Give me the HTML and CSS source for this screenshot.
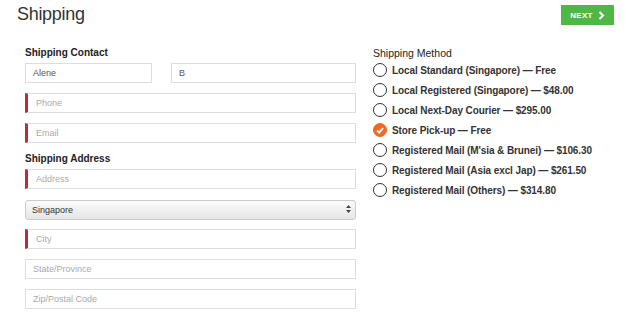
FILE: index.html
```html
<!DOCTYPE html>
<html>
<head>
	<title>Shipping</title>
	<link rel="stylesheet" href="styles.css">
</head>
<body>
<div class="header">
	<h1>Shipping</h1>
	<a class="btn-next" href="#">NEXT
		<svg width="7" height="9" viewBox="0 0 7 9"><path d="M1.5 1 L5 4.5 L1.5 8" fill="none" stroke="#fff" stroke-width="2"/></svg>
	</a>
</div>
<div class="main">
	<div class="col-left">
		<h3 class="label">Shipping Contact</h3>
		<div class="row two">
			<input type="text" class="ipt first" value="Alene">
			<input type="text" class="ipt last" value="B">
		</div>
		<div class="row"><input type="text" class="ipt req" placeholder="Phone"></div>
		<div class="row"><input type="text" class="ipt req" placeholder="Email"></div>

		<h3 class="label label-gap">Shipping Address</h3>
		<div class="row"><input type="text" class="ipt req" placeholder="Address"></div>
		<div class="row select">
			<select>
				<option>Singapore</option>
			</select>
			<svg class="arrows" width="5" height="8" viewBox="0 0 5 8"><path d="M2.5 0 L5 3 L0 3 Z M2.5 8 L5 5 L0 5 Z" fill="#444"/></svg>
		</div>
		<div class="row"><input type="text" class="ipt req" placeholder="City"></div>
		<div class="row"><input type="text" class="ipt" placeholder="State/Province"></div>
		<div class="row"><input type="text" class="ipt" placeholder="Zip/Postal Code"></div>
	</div>
	<div class="col-right">
		<h3 class="method-title">Shipping Method</h3>
		<ul class="methods">
			<li><span class="radio"></span>Local Standard (Singapore) — Free</li>
			<li><span class="radio"></span>Local Registered (Singapore) — $48.00</li>
			<li><span class="radio"></span>Local Next-Day Courier — $295.00</li>
			<li><span class="radio checked"><svg width="8" height="7" viewBox="0 0 8 7"><path d="M1 3.5 L3.2 5.6 L7 1.2" fill="none" stroke="#fff" stroke-width="1.8"/></svg></span>Store Pick-up — Free</li>
			<li><span class="radio"></span>Registered Mail (M'sia &amp; Brunei) — $106.30</li>
			<li><span class="radio"></span>Registered Mail (Asia excl Jap) — $261.50</li>
			<li><span class="radio"></span>Registered Mail (Others) — $314.80</li>
		</ul>
	</div>
</div>
</body>
</html>
```
FILE: styles.css
```css
*{
	margin: 0;
	padding: 0;
	list-style: none;
	box-sizing: border-box;
}
body{
	font-family: "Liberation Sans", Arial, sans-serif;
	color: #333;
	background: #fff;
}
.header{
	height: 32px;
	padding: 2px 26px 0 17px;
	display: flex;
	justify-content: space-between;
	align-items: flex-start;
}
h1{
	font-size: 18px;
	line-height: 24px;
	font-weight: normal;
	letter-spacing: -0.3px;
	color: #333;
}
.btn-next{
	margin-top: 3px;
	width: 53px;
	height: 20px;
	background: #4fb748;
	color: #fff;
	font-size: 8px;
	font-weight: bold;
	text-decoration: none;
	display: flex;
	align-items: center;
	justify-content: center;
	gap: 5px;
	letter-spacing: 0.3px;
}
.main{
	display: flex;
	gap: 17px;
	padding: 14px 0 0 25px;
}
.col-left{
	width: 331px;
}
.label{
	font-size: 10px;
	line-height: 14px;
	font-weight: bold;
	color: #222;
	margin-bottom: 3px;
}
.label-gap{
	margin-top: -1px;
}
.row{
	margin-bottom: 10px;
	height: 20px;
}
.row.two{
	display: flex;
	gap: 19px;
}
.ipt{
	display: block;
	width: 100%;
	height: 20px;
	border: 1px solid #ddd;
	padding: 0 7px;
	font-family: "Liberation Sans", Arial, sans-serif;
	font-size: 9px;
	color: #555;
	outline: none;
	background: #fff;
}
.ipt::placeholder{
	color: #aaa;
}
.ipt.first{
	width: 127px;
}
.ipt.last{
	width: 185px;
}
.ipt.req{
	border-left: 3px solid #b82c3c;
	padding-left: 8px;
}
.select{
	position: relative;
}
.select select{
	-webkit-appearance: none;
	appearance: none;
	width: 100%;
	height: 20px;
	border: 1px solid #ccc;
	border-radius: 3px;
	padding: 0 6px;
	font-family: "Liberation Sans", Arial, sans-serif;
	font-size: 9px;
	color: #333;
	background: linear-gradient(#fbfbfb, #e6e6e6);
	outline: none;
}
.select .arrows{
	position: absolute;
	right: 5px;
	top: 6px;
}
.method-title{
	font-size: 10.5px;
	line-height: 14px;
	font-weight: normal;
	color: #222;
}
.methods li{
	height: 20px;
	display: flex;
	align-items: center;
	font-size: 10px;
	font-weight: bold;
	color: #333;
	letter-spacing: -0.1px;
}
.radio{
	width: 14px;
	height: 14px;
	border: 1.5px solid #333;
	border-radius: 50%;
	margin-right: 5px;
	flex-shrink: 0;
	display: flex;
	align-items: center;
	justify-content: center;
}
.radio.checked{
	background: #ee6a2a;
	border-color: #ee6a2a;
}
```
